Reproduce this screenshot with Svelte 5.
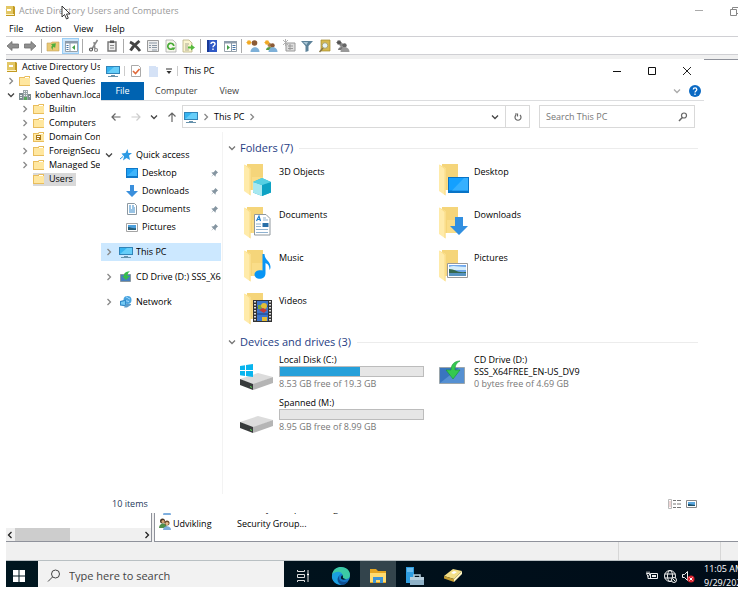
<script>
  const menus = ['File', 'Action', 'View', 'Help'];
  const tools = ['back', 'forward', '|', 'up', 'tree', '|', 'cut', 'clipboard', '|', 'delete', 'props', 'refresh', 'export', '|', 'help', 'pane', '|', 'user', 'group', 'unit', 'filter', 'find', 'addgroup'];
  const tree = [
    { label: 'Active Directory Users and Computers', level: 0, icon: 'book' },
    { label: 'Saved Queries', level: 1, icon: 'folder', arrow: 'right' },
    { label: 'kobenhavn.local', level: 1, icon: 'domain', arrow: 'down' },
    { label: 'Builtin', level: 2, icon: 'folder', arrow: 'right' },
    { label: 'Computers', level: 2, icon: 'folder', arrow: 'right' },
    { label: 'Domain Controllers', level: 2, icon: 'ou', arrow: 'right' },
    { label: 'ForeignSecurityPrincipals', level: 2, icon: 'folder', arrow: 'right' },
    { label: 'Managed Service Accounts', level: 2, icon: 'folder', arrow: 'right' },
    { label: 'Users', level: 2, icon: 'folder', selected: true }
  ];
  const nav = [
    [
      { label: 'Quick access', icon: 'star', arrow: 'down' },
      { label: 'Desktop', icon: 'desktop', pin: true },
      { label: 'Downloads', icon: 'download', pin: true },
      { label: 'Documents', icon: 'document', pin: true },
      { label: 'Pictures', icon: 'picture', pin: true }
    ],
    [{ label: 'This PC', icon: 'pc', arrow: 'right', selected: true }],
    [{ label: 'CD Drive (D:) SSS_X64FREE_EN-US_DV9', icon: 'cd', arrow: 'right' }],
    [{ label: 'Network', icon: 'network', arrow: 'right' }]
  ];
  const folders = ['3D Objects', 'Desktop', 'Documents', 'Downloads', 'Music', 'Pictures', 'Videos'];
  const drives = [
    { name: 'Local Disk (C:)', used: 56, free: '8.53 GB free of 19.3 GB', icon: 'system' },
    { name: 'CD Drive (D:)', label: 'SSS_X64FREE_EN-US_DV9', free: '0 bytes free of 4.69 GB', icon: 'cd' },
    { name: 'Spanned (M:)', used: 0, free: '8.95 GB free of 8.99 GB', icon: 'disk' }
  ];
</script>

{#snippet chevron(dir)}
  <svg class="chev" viewBox="0 0 8 8" class:down={dir === 'down'}><path d="M2.500 1 L5.500 4 L2.500 7" fill="none" stroke="currentColor" stroke-width="1.300" /></svg>
{/snippet}

{#snippet treeIcon(kind)}
  <svg class="i12" viewBox="0 0 12 12">
    {#if kind === 'book'}
      <path d="M1 1h9l1 1v9H1z" fill="#c29a22" /><path d="M1 1h8v9H1z" fill="#e3c765" /><path d="M3 4h4v2H3z" fill="#fff" /><path d="M1 9h9v1H1z" fill="#fff3c4" />
    {:else if kind === 'domain'}
      <path d="M4 1h5v10H4z" fill="#9aa5a8" /><path d="M0 4h4v7H0zM9 5h3v6H9z" fill="#7d8b8f" /><path d="M5 2h1v1H5zM7 2h1v1H7zM5 4h1v1H5zM7 4h1v1H7zM5 6h1v1H5zM7 6h1v1H7zM1 6h2v1H1zM1 8h2v1H1zM10 7h1v1h-1z" fill="#eef4f4" /><path d="M5 8h3v3H5z" fill="#57a85c" />
    {:else}
      <path d="M0 2h5l1-1h5v10H0z" fill="#e9bd5c" /><path d="M1 3h10v7H1z" fill="#ffe7a0" /><path d="M6 2h4v1H6z" fill="#fff" />
      {#if kind === 'ou'}<path d="M3 4h5v5H3z" fill="#a8781c" /><path d="M4 5h3v1H4zM4 7h2v1H4z" fill="#fff" />{/if}
    {/if}
  </svg>
{/snippet}

{#snippet toolIcon(kind)}
  <svg class="i14" viewBox="0 0 14 14">
    {#if kind === 'back' || kind === 'forward'}
      <path d={kind === 'back' ? 'M1 7l5-4.500v2.500h6.500v4H6v2.500z' : 'M13 7L8 2.500v2.500H1.500v4H8v2.500z'} fill="#8f8f8f" stroke="#6f6f6f" stroke-width=".8" />
    {:else if kind === 'up'}
      <path d="M1 4h4l1-1h7v9H1z" fill="#e9c976" stroke="#c6a35a" stroke-width=".6" /><path d="M4 10c0-3 1-4 3-4V4l4 3-4 3V8c-1 0-2 0-3 2z" fill="#4fae3c" transform="rotate(-45 7 7)" />
    {:else if kind === 'tree' || kind === 'pane'}
      <path d="M1.500 2.500h12v10h-12z" fill="#fff" stroke="#98a2aa" /><path d="M1 2h13v2.500H1z" fill="#8c9baa" /><path d="M2.500 6h2v1h-2zM2.500 8h2v1h-2zM2.500 10h2v1h-2z" fill={kind === 'tree' ? '#4475a8' : '#fff'} /><path d="M9.500 6h3v1h-3zM9.500 8h3v1h-3zM9.500 10h3v1h-3z" fill={kind === 'pane' ? '#4475a8' : '#fff'} />
      <path d={kind === 'tree' ? 'M6 4v8' : 'M8.500 4v8'} stroke="#8c9baa" />
      <path d={kind === 'tree' ? 'M11 6v5L8 8.500z' : 'M4 6v5l3-2.500z'} fill="#43a047" />
    {:else if kind === 'cut'}
      <path d="M10.500 1L5 10M7 3l1 7" stroke="#888" stroke-width="1.500" fill="none" /><circle cx="4" cy="10.500" r="1.500" fill="none" stroke="#555" stroke-width="1.200" /><circle cx="9" cy="11" r="1.500" fill="none" stroke="#888" stroke-width="1.200" />
    {:else if kind === 'clipboard'}
      <path d="M3 3h8v9H3z" fill="#eee" stroke="#777" stroke-width="1.400" /><path d="M5 1.500h4v2.500H5z" fill="#555" /><path d="M5 6.500h4M5 9h4" stroke="#888" />
    {:else if kind === 'delete'}
      <path d="M2 3c4 2 7 5 10 9M11.500 2C8 5 5 7 2.500 11.500" stroke="#444" stroke-width="2.800" fill="none" />
    {:else if kind === 'props'}
      <path d="M1.500 1.500h11v11h-11z" fill="#eee" stroke="#999" /><path d="M3 4h8M3 6.500h2m1 0h5M3 8.500h2m1 0h5M6 11h5" stroke="#8b98a4" />
    {:else if kind === 'refresh'}
      <path d="M2 1h7l3 3v9H2z" fill="#f7f7ee" stroke="#aaa" stroke-width=".8" /><path d="M8.800 9.500A3 3 0 1 1 9.800 7" fill="none" stroke="#49ab37" stroke-width="1.700" /><path d="M7.500 8.500h4l-1.800 2.800z" fill="#49ab37" />
    {:else if kind === 'export'}
      <path d="M1 1h6l3 3v9H1z" fill="#fbf5cf" stroke="#b8af83" stroke-width=".8" /><path d="M3 5h4M3 7h3M3 9h3M3 11h4" stroke="#8b8b7a" stroke-width=".7" /><path d="M6 7.500h3V5.500l4 3-4 3V9.500H6z" fill="#55ba3d" />
    {:else if kind === 'help'}
      <path d="M2 1h10v12H2z" fill="#3059c6" /><path d="M2 1h2v12H2z" fill="#183996" /><path d="M6 5c0-2.400 4-2.400 4 0 0 1.500-2 1.500-2 3.200M8 9.500V11" stroke="#fff" stroke-width="1.400" fill="none" />
    {:else if kind === 'filter'}
      <path d="M1 2h12L8.500 7v5L5.500 13V7z" fill="#5d8299" /><path d="M3 3h5L6.500 6z" fill="#a9c6d6" />
    {:else if kind === 'find'}
      <path d="M3 1h9v11H3z" fill="#d6b94d" stroke="#a58a2c" stroke-width=".7" /><circle cx="7" cy="6.500" r="2.800" fill="#e6f3f7" stroke="#a9a374" /><path d="M5 9l-3.500 4" stroke="#887746" stroke-width="1.500" />
    {:else if kind === 'unit'}
      <path d="M4 4h9v8H4z" fill="#ddd" stroke="#999" /><path d="M6 7h5M6 9.500h5M8 5v6" stroke="#999" /><path d="M1 1l5 5M6 1L1 6M3.500 0v7" stroke="#aaa" stroke-width=".9" />
    {:else if kind === 'members'}
      <circle cx="4.500" cy="4" r="2.500" fill="#4a3422" /><circle cx="5" cy="4.500" r="1.500" fill="#d9a777" /><path d="M1 11c0-6 8-6 8 0z" fill="#4f8f4a" />
      <circle cx="9" cy="6" r="2.500" fill="#6c4a2b" /><circle cx="9" cy="6.500" r="1.600" fill="#e8bd8d" /><path d="M5 13c0-5 8-5 8 0z" fill="#7eaede" />
    {:else}
      {@const grey = kind === 'addgroup'}
      {#if kind !== 'user'}<circle cx="5.500" cy="6" r="2" fill={grey ? '#888' : '#a9804e'} /><path d="M2 11c0-4 7-4 7 0z" fill={grey ? '#777' : '#559c45'} />{/if}
      <circle cx="8.500" cy={kind === 'user' ? 4 : 6.500} r={kind === 'user' ? 2.800 : 2.200} fill={grey ? '#666' : '#8b5a35'} /><path d="M4.500 13c0-6.500 9-6.500 9 0z" fill={grey ? '#999' : '#7eb0d8'} />
      <path d="M0.500 3.500h5M3 1v5M1.300 1.800l3.400 3.400M4.700 1.800L1.300 5.200" stroke={grey ? '#555' : '#f2a922'} stroke-width="1.100" />
    {/if}
  </svg>
{/snippet}

{#snippet navIcon(kind)}
  <svg class="i14" viewBox="0 0 14 14">
    {#if kind === 'star'}
      <path d="M8.500 1l.8 4H13l-3 2.500 1 4.500-3.500-2L4 12.500 5 8.500 2.500 5.500 6.500 5z" fill="#2c9ae4" /><path d="M1 11l3-2.500" stroke="#2c9ae4" />
    {:else if kind === 'desktop'}
      <path d="M1 2h12v10H1z" fill="#0f78c8" /><path d="M2 3h10v7H2z" fill="#1ea1f5" /><path d="M2 10L10 3h2v7z" fill="#40b5fb" />
    {:else if kind === 'download'}
      <path d="M5 1h4v6h4l-6 6-6-6h4z" fill="#3a8fdc" />
    {:else if kind === 'document'}
      <path d="M2.500 1.500h7l2 2v9h-9z" fill="#fff" stroke="#8c98a1" /><path d="M4 4h2m1 0h2M4 6h2m1 0h3M4 8h6M4 10h6" stroke="#3287c9" />
    {:else if kind === 'picture'}
      <path d="M1.500 3.500h11v8h-11z" fill="#fff" stroke="#a5a5a5" /><path d="M3 5h8v5H3z" fill="#4b9fdc" /><path d="M3 7c3 0 5 2 8 1v2H3z" fill="#285e78" />
    {:else if kind === 'pc'}
      <path d="M0 2h14v8H0z" fill="#3184b8" /><path d="M1 3h12v6H1z" fill="#36b4f0" /><path d="M1 9l7-6h5v6z" fill="#67cef9" /><path d="M5 11h4v1H5zM2 12h10v1H2z" fill="#6792ac" />
    {:else if kind === 'cd'}
      <path d="M1.500 4.500h10v7h-10z" fill="#467fbd" stroke="#8a979f" /><path d="M11 1C6 2 5 3 5 6H3l4 4 4-4H8.500c0-2 .5-3 2.500-5z" fill="#36bd4c" />
    {:else}
      <circle cx="8.500" cy="5" r="4" fill="#4aa4df" /><path d="M7 2c2 0 2 2 4 2M6 5.500l4 1" stroke="#a7dcff" fill="none" /><path d="M1 6l6-1.500v7L1 10.500z" fill="#328bc9" /><path d="M2 7l4-1v4l-4-.5z" fill="#75caf4" /><path d="M7 9h5v1L8 12.500H5z" fill="#5f9cc9" />
    {/if}
  </svg>
{/snippet}

{#snippet folderIcon(kind)}
  <svg class="big" viewBox="0 0 34 34">
    <path d="M8 1h16v26H8z" fill="#f5d57a" /><path d="M13 14h11v13H13z" fill="#fadd88" /><path d="M5 1.500L11.500 5v27.500L5 28z" fill="#ffebaa" /><path d="M5 1.500L11.500 5v27.500l-1-.7V6z" fill="#f9dc86" />
    {#if kind === '3D Objects'}
      <path d="M14 19l9-4 9 4v10.500l-9 3.500-9-3.500z" fill="#27b4d0" /><path d="M14 19l9 3v11l-9-3.500z" fill="#a7e8f0" /><path d="M23 22l9-3v10.500L23 33z" fill="#0da2c4" /><path d="M14 19l9-4 9 4-9 3z" fill="#56d0e3" />
    {:else if kind === 'Desktop'}
      <path d="M14 14h21v16H14z" fill="#0873c6" /><path d="M15 15h19v12.500H15z" fill="#14a0ff" /><path d="M18 27.500L30 15h4v12.500z" fill="#36b0ff" />
    {:else if kind === 'Documents'}
      <path d="M15.500 8.500H27l4 4v16.500H15.500z" fill="#fff" stroke="#8f989d" /><path d="M17.500 15l2.500-5 1.500 5M18.500 13.500h3" stroke="#1b7fd0" stroke-width="1.200" fill="none" /><path d="M24 12h3M24 14h5M17 18h5M17 20.500h5M17 23.500h12M17 26.500h12" stroke="#8fb2d0" /><path d="M23.500 17h6v4h-6z" fill="#286fa8" />
    {:else if kind === 'Downloads'}
      <path d="M21 11h8v9h5l-9 9-9-9h5z" fill="#318fe0" />
    {:else if kind === 'Music'}
      <path d="M23.500 5h2c0 6 6 7 6 13 0 2-1 3-1 3 0-5-2-6-4-7v10c0 8-11 7-11 1.500 0-4 5-5 8-4z" fill="#0795f5" />
    {:else if kind === 'Pictures'}
      <path d="M13.500 14.500h20v14h-20z" fill="#fff" stroke="#999" /><path d="M15 16h17v11H15z" fill="#70a8ed" /><path d="M15 18c5-2 8 0 17 0v3H15z" fill="#d6edfa" /><path d="M15 20c6 0 8 4 17 3v2H15z" fill="#36694f" /><path d="M15 24h17v3H15z" fill="#5793c0" />
    {:else}
      <path d="M14 8h19v22H14z" fill="#333" /><path d="M18 9h11v20H18z" fill="#3c75cc" /><path d="M18 22h11M18 16l11-2" stroke="#183c80" /><circle cx="25" cy="14" r="3" fill="#e4bd35" /><path d="M20 18l4-2 4 2-3 3z" fill="#c53a37" /><path d="M23 25h5v4h-5z" fill="#e4bd35" /><path d="M19 13h3v4h-3z" fill="#7aa83d" /><path d="M16 9v20M31 9v20" stroke="#ddd" stroke-width="2" stroke-dasharray="1.500 1.500" />
    {/if}
  </svg>
{/snippet}

{#snippet driveIcon(kind)}
  <svg class="big" viewBox="0 0 34 34">
    {#if kind === 'cd'}
      <path d="M5.500 10.500h25v16h-25z" fill="#3975bf" stroke="#9aa5ab" /><path d="M6 26L25 11h5v15z" fill="#5590d2" /><path d="M26 4c-6 0-9 4-9 9h-5l7 9 7-9h-5c0-4 1-7 5-9z" fill="#35c94f" stroke="#169536" stroke-width=".6" />
    {:else}
      <path d="M1 22l18-6 15 4-20 8z" fill="#dcdcdc" /><path d="M1 22l13 5v6L1 28z" fill="#383b3c" /><path d="M14 27l20-7v6l-20 7z" fill="#b5b5b5" /><path d="M11 29l2 1v1l-2-1z" fill="#5cdb54" />
      {#if kind === 'system'}<path d="M1 9l5-.7V13H1zM7 8l7-1v6H7zM1 14h5v5l-5-.7zM7 14h7v6l-7-1z" fill="#08b4ee" />{/if}
    {/if}
  </svg>
{/snippet}

<div class="desktop">
  <section class="console">
    <header class="c-title">
      {@render treeIcon('book')}
      <h1>Active Directory Users and Computers</h1>
      <svg class="winctl" viewBox="0 0 48 12"><path d="M5 5.500h8" stroke="#aaa" /><path d="M40.500 4.500h6v6h-6zM42.500 4V2.500h6v6H47" fill="none" stroke="#888" /></svg>
    </header>
    <nav class="c-menu">
      {#each menus as m}<button>{m}</button>{/each}
    </nav>
    <div class="c-tools">
      {#each tools as t}
        {#if t === '|'}<i></i>{:else}<button aria-label={t} class:on={t === 'tree'}>{@render toolIcon(t)}</button>{/if}
      {/each}
    </div>

    <div class="c-body">
      <div class="c-tree">
        <ul>
          {#each tree as n}
            <li class="l{n.level}">
              {#if n.level}<span class="tw">{#if n.arrow}{@render chevron(n.arrow)}{/if}</span>{/if}
              <span class="node" class:sel={n.selected}>{@render treeIcon(n.icon)}<span>{n.label}</span></span>
            </li>
          {/each}
        </ul>
        <div class="scroll">
          <button aria-label="Scroll left" class="flip">{@render chevron('right')}</button>
          <div class="track"><div class="thumb"></div></div>
          <button aria-label="Scroll right">{@render chevron('right')}</button>
        </div>
      </div>
      <div class="c-list">
        <table>
          <tbody>
            <tr><td>{@render toolIcon('members')}</td><td>Schema</td><td>Security Group...</td><td>Designated</td></tr>
            <tr><td>{@render toolIcon('members')}</td><td>Udvikling</td><td>Security Group...</td><td></td></tr>
          </tbody>
        </table>
      </div>

      <section class="explorer">
        <header class="e-title">
          {@render navIcon('pc')}
          <i></i>
          <svg class="i14" viewBox="0 0 14 14"><path d="M2.500 1.500h7l2 2v9h-9z" fill="#fff" stroke="#aaa" /><path d="M4 7l2.500 2.500L10.500 5" fill="none" stroke="#e0693a" stroke-width="1.600" /></svg>
          <svg class="i14" viewBox="0 0 14 14"><path d="M2 2h7v1h2v10H2z" fill="#d5e2f6" /></svg>
          <svg class="i8" viewBox="0 0 8 8"><path d="M1 2h6" stroke="#333" /><path d="M1.500 4h5L4 7z" fill="#333" /></svg>
          <i></i>
          <h2>This PC</h2>
          <div class="e-ctl">
            <button aria-label="Minimize"><svg viewBox="0 0 10 10"><path d="M1 5.500h8" stroke="#111" /></svg></button>
            <button aria-label="Maximize"><svg viewBox="0 0 10 10"><path d="M1.500 1.500h7v7h-7z" fill="none" stroke="#111" /></svg></button>
            <button aria-label="Close"><svg viewBox="0 0 10 10"><path d="M1 1l8 8M9 1L1 9" stroke="#222" /></svg></button>
          </div>
        </header>
        <nav class="e-tabs">
          <button class="file">File</button>
          <button>Computer</button>
          <button>View</button>
          <span class="tail">
            {@render chevron('down')}
            <svg class="i12" viewBox="0 0 12 12"><circle cx="6" cy="6" r="6" fill="#0b6ac4" /><path d="M4.300 4.500c0-2.300 3.500-2.300 3.500 0C7.800 6 6 5.800 6 7.400M6 8.500V10" fill="none" stroke="#fff" stroke-width="1.300" /></svg>
          </span>
        </nav>
        <div class="e-addr">
          <div class="arrows">
            <svg class="i12" viewBox="0 0 12 12"><path d="M10.500 6H2.500M5.500 2.500L2 6l3.500 3.500" fill="none" stroke="#666" stroke-width="1.200" /></svg>
            <svg class="i12" viewBox="0 0 12 12"><path d="M1.500 6h8M6.500 2.500L10 6 6.500 9.500" fill="none" stroke="#ccc" stroke-width="1.200" /></svg>
            {@render chevron('down')}
            <svg class="i12" viewBox="0 0 12 12"><path d="M6 11V2M2.500 5.500L6 2l3.500 3.500" fill="none" stroke="#666" stroke-width="1.200" /></svg>
          </div>
          <div class="path">
            {@render navIcon('pc')}{@render chevron('right')}<span>This PC</span>{@render chevron('right')}
            <span class="drop">{@render chevron('down')}</span>
            <button aria-label="Refresh"><svg class="i12" viewBox="0 0 12 12"><path d="M4 4A3 3 0 1 0 8 4M3 3h2.500v2.500" fill="none" stroke="#666" stroke-width="1.200" /></svg></button>
          </div>
          <label class="find">
            <input type="text" placeholder="Search This PC" aria-label="Search This PC" />
            <svg class="i12" viewBox="0 0 12 12"><circle cx="7" cy="4.500" r="2.500" fill="none" stroke="#666" stroke-width="1.200" /><path d="M5.300 6.500L2 10" stroke="#666" stroke-width="1.500" /></svg>
          </label>
        </div>
        <div class="e-main">
          <aside>
            {#each nav as group}
              <ul>
                {#each group as n}
                  <li class:sel={n.selected} class:child={n.pin}>
                    <span class="tw">{#if n.arrow}{@render chevron(n.arrow)}{/if}</span>
                    {@render navIcon(n.icon)}
                    <span class="txt">{n.label}</span>
                    {#if n.pin}<svg class="pin" viewBox="0 0 10 10"><path d="M6 1l3 3-1 .5L6.500 6 6 8.500 4 6.500 1 9l2.500-3L1.500 4 4 3.500 5.500 2z" fill="#8595a1" /></svg>{/if}
                  </li>
                {/each}
              </ul>
            {/each}
          </aside>
          <div class="files">
            <h3>{@render chevron('down')}Folders (7)</h3>
            <div class="grid">
              {#each folders as f}
                <div class="item">{@render folderIcon(f)}<div class="meta one">{f}</div></div>
              {/each}
            </div>
            <h3>{@render chevron('down')}Devices and drives (3)</h3>
            <div class="grid">
              {#each drives as d}
                <div class="item">
                  {@render driveIcon(d.icon)}
                  <div class="meta">
                    <div>{d.name}</div>
                    {#if d.label}<div>{d.label}</div>{:else}<div class="bar"><div style="width:{d.used}%"></div></div>{/if}
                    <div class="dim">{d.free}</div>
                  </div>
                </div>
              {/each}
            </div>
          </div>
        </div>
        <footer class="e-status">
          <span>10 items</span>
          <svg viewBox="0 0 30 12"><path d="M.5 1.500h3v9h-3z" fill="#fff" stroke="#bbb" /><path d="M1.500 4h1M1.500 6h1M1.500 8h1" stroke="#b55" /><path d="M5 2.500h3m1 0h4M5 6h3m1 0h4M5 9.500h3m1 0h4" stroke="#777" /><path d="M18.500 2.500h10v7h-10z" fill="#fff" stroke="#888" /><path d="M20 4h7v4h-7z" fill="#5ca8df" /><path d="M20 6c3 0 4 1 7 1v1h-7z" fill="#1d4f67" /></svg>
        </footer>
      </section>
    </div>
    <footer class="c-status"><span></span><span></span></footer>
  </section>

  <footer class="taskbar">
    <button class="start" aria-label="Start"><svg class="i14" viewBox="0 0 14 14"><path d="M1 1h5.500v5.500H1zM7.500 1H13v5.500H7.500zM1 7.500h5.500V13H1zM7.500 7.500H13V13H7.500z" fill="#fff" /></svg></button>
    <label class="tsearch">
      <svg class="i14" viewBox="0 0 14 14"><circle cx="8.500" cy="5" r="4" fill="none" stroke="#444" /><path d="M5.500 8L1 12.500" stroke="#444" /></svg>
      <input type="text" placeholder="Type here to search" aria-label="Type here to search" />
    </label>
    <div class="apps">
      <button aria-label="Task view"><svg class="i14" viewBox="0 0 14 14"><path d="M1.500 1v1.500h7V1M1.500 13v-1.500h7V13M1.500 5.500h7v3h-7z" fill="none" stroke="#ddd" /><path d="M12 1v3m0 3v6" stroke="#ddd" /><path d="M11 4.500h2v2h-2z" fill="#fff" /></svg></button>
      <button aria-label="Edge"><svg class="i20" viewBox="0 0 20 20"><circle cx="10" cy="10" r="9" fill="#1678c8" /><path d="M1 9C2 3 6 1 10 1c6 0 9 4 9 8 0 3-2 4-4 4s-4-1-3-3c0-4-8-5-11-1z" fill="#3cc9a4" /><path d="M1 9c3-4 9-4 10-1-5 0-5 7 0 11C5 19 0 15 1 9z" fill="#1a9fe0" /><path d="M8 10c-1 6 5 7 9 5-2 3-4 4-6 4-4-1-6-6-3-9z" fill="#0e4f92" /><path d="M12 10c-1 2 1 3 3 3-1 1-5 1-5-1 0-2 1-3 2-2z" fill="#021722" /></svg></button>
      <button aria-label="File Explorer" class="on"><svg class="i20" viewBox="0 0 20 20"><path d="M2 3h6l2 2h8v12H2z" fill="#e5a622" /><path d="M2 7h16v9H2z" fill="#ffdc71" /><path d="M5 11h10v6h-3v-3H8v3H5z" fill="#3d94d6" /></svg></button>
      <button aria-label="Server Manager"><svg class="i20" viewBox="0 0 20 20"><path d="M1 1h8v16H1z" fill="#2f9de0" /><path d="M2 3h6M2 5h6" stroke="#a5dafa" /><path d="M5 11h14v8H5z" fill="#8fb2c8" /><path d="M5 11h14v3H5z" fill="#b7cfdd" /><path d="M9 11V9h6v2" fill="none" stroke="#b7cfdd" stroke-width="1.500" /></svg></button>
      <button aria-label="Directory"><svg class="i20" viewBox="0 0 20 20"><path d="M1 10l9-7 9 2-8 8z" fill="#f2df87" /><path d="M1 10l10 3v3L1 12.500z" fill="#c49d31" /><path d="M11 13l8-8v3l-8 8z" fill="#fff4c0" /><path d="M8 7l3-2 3 1-3 2z" fill="#fff" /></svg></button>
    </div>
    <div class="tray">
      <svg class="i14" viewBox="0 0 14 14"><path d="M5.500 4.500h7v5h-7z" fill="none" stroke="#eee" /><path d="M7 6h4v2H7z" fill="#eee" /><path d="M1.500 4.500h3v1.500L3 7.500zM2 2.500v2M4 2.500v2M3 7v2.500h3" fill="none" stroke="#eee" /></svg>
      <svg class="i14" viewBox="0 0 14 14"><circle cx="7" cy="7" r="5.500" fill="none" stroke="#eee" /><ellipse cx="7" cy="7" rx="2.500" ry="5.500" fill="none" stroke="#eee" /><path d="M1.500 5h11M1.500 9h11" stroke="#eee" /><circle cx="11" cy="11" r="2.500" fill="#001018" stroke="#eee" /><path d="M9.500 9.500l3 3" stroke="#eee" /></svg>
      <svg class="i14" viewBox="0 0 14 14"><path d="M1.500 5.500h2l3-3v9l-3-3h-2z" fill="none" stroke="#eee" /><circle cx="10" cy="10" r="3.500" fill="#dc2430" /><path d="M8.500 8.500l3 3m0-3l-3 3" stroke="#fff" /></svg>
    </div>
    <div class="clock"><span>11:05 AM</span><span>9/29/2021</span></div>
  </footer>

  <svg class="cursor" viewBox="0 0 10 15"><path d="M1 1v11l2.500-2.500L5.500 14l1.800-.8L5.500 9H9z" fill="#fff" stroke="#222" stroke-width=".9" /></svg>
</div>

<style>
  :global(body) { background: #fff; }
  .desktop, .desktop * { box-sizing: border-box; }
  .desktop {
    position: relative;
    margin: 0 5px 0 6px;
    height: calc(100vh - 5px);
    display: flex;
    flex-direction: column;
    overflow: hidden;
    font: 9px/12px "Open Sans", "Noto Sans", sans-serif;
    color: #000;
  }
  button { border: 0; padding: 0; background: none; font: inherit; color: inherit; display: flex; align-items: center; justify-content: center; }
  input { border: 0; padding: 0; background: none; font: inherit; min-width: 0; flex: 1; outline: 0; }
  ul { list-style: none; margin: 0; padding: 0; }
  h1, h2, h3 { margin: 0; font: inherit; }
  svg { flex: none; display: block; }
  .i8, .chev { width: 8px; height: 8px; }
  .i12 { width: 12px; height: 12px; }
  .i14 { width: 14px; height: 14px; }
  .i20 { width: 20px; height: 20px; }
  .big { width: 34px; height: 34px; overflow: visible; }
  .chev { color: #888; }
  .chev.down { transform: rotate(90deg); color: #444; }
  .cursor { position: absolute; left: 55px; top: 5px; width: 10px; height: 15px; }

  .console { flex: 1; min-height: 0; display: flex; flex-direction: column; }
  .c-title { height: 21px; display: flex; align-items: center; color: #999; }
  .c-title h1 { flex: 1; }
  .c-title .winctl { width: 48px; height: 12px; }
  .c-title .i12 { margin-left: -2px; margin-right: 3px; }
  .c-menu { height: 15px; display: flex; gap: 12px; padding-left: 3px; }
  .c-tools { height: 19px; border: solid #d0d0d4; border-width: 1px 0; display: flex; align-items: center; gap: 1px; }
  .c-tools button { width: 17px; height: 16px; }
  .c-tools button:first-child { width: 14px; }
  .c-tools .on { background: #cce5fa; outline: 1px solid #99cdf5; outline-offset: -1px; }
  .c-tools i { width: 1px; height: 14px; background: #aaa; margin: 0 1px 0 2px; }

  .c-body { flex: 1; min-height: 0; display: flex; gap: 2px; padding-top: 4px; background: #f0f0f0; position: relative; }
  .c-tree { width: 146px; background: #fff; border: solid #8f929b; border-width: 1px 1px 1px 0; display: flex; flex-direction: column; justify-content: space-between; }
  .c-tree ul { width: 94px; }
  .c-tree li { height: 14px; display: flex; align-items: center; white-space: nowrap; overflow: hidden; }
  .c-tree .l2 { padding-left: 14px; }
  .tw { width: 13px; display: flex; justify-content: center; padding-right: 3px; flex: none; }
  .c-tree .node { display: flex; align-items: center; gap: 4px; padding-right: 3px; height: 13px; }
  .c-tree .sel { background: #d9d9d9; }
  .scroll { height: 13px; background: #f0f0f0; display: flex; }
  .scroll button { width: 9px; }
  .scroll .chev { color: #222; }
  .scroll .flip { transform: scaleX(-1); }
  .track { flex: 1; display: flex; }
  .thumb { width: 43%; background: #cdcdcd; }
  .c-list { flex: 1; background: #fff; border: solid #8f929b; border-width: 1px 0 1px 1px; display: flex; align-items: flex-end; padding: 0 0 10px 3px; }
  table { border-collapse: collapse; }
  td { height: 15px; padding: 0; white-space: nowrap; }
  td:nth-child(1) { width: 15px; }
  td:nth-child(2) { width: 64px; }
  td:nth-child(3) { width: 78px; }
  .c-status { height: 18px; background: #f0f0f0; display: flex; justify-content: flex-end; }
  .c-status span { border-left: 1px solid #d7d7d7; width: 102px; }
  .c-status span:last-child { width: 18px; }

  .explorer { position: absolute; left: 95px; top: 4px; right: 34px; bottom: 29px; background: #fff; display: flex; flex-direction: column; }
  .e-title { height: 23px; display: flex; align-items: center; gap: 4px; padding-left: 5px; }
  .e-title i { width: 1px; height: 10px; background: #ccc; }
  .e-title h2 { padding-left: 2px; }
  .e-ctl { margin-left: auto; display: flex; }
  .e-ctl button { width: 35px; height: 20px; }
  .e-ctl svg { width: 10px; height: 10px; }
  .e-tabs { height: 19px; border-bottom: 1px solid #dcdddf; display: flex; color: #444; }
  .e-tabs button { padding: 0 11px; }
  .e-tabs .file { background: #0063b1; color: #fff; width: 43px; }
  .tail { margin-left: auto; display: flex; align-items: center; gap: 8px; padding-right: 3px; }
  .tail .chev.down { color: #aaa; }
  .e-addr { height: 31px; display: flex; align-items: center; gap: 9px; padding: 0 9px; }
  .arrows { display: flex; align-items: center; gap: 8px; flex: none; width: 63px; }
  .path { flex: 1; height: 23px; border: 1px solid #d9d9d9; display: flex; align-items: center; gap: 4px; padding-left: 1px; }
  .path .drop { margin-left: auto; padding-right: 2px; }
  .path button { width: 24px; height: 21px; border-left: 1px solid #d9d9d9; }
  .find { width: 156px; height: 23px; border: 1px solid #d9d9d9; display: flex; align-items: center; padding: 0 5px 0 6px; }
  input::placeholder { color: #777; opacity: 1; }
  .e-main { flex: 1; min-height: 0; display: flex; }
  aside { width: 122px; border-right: 1px solid #f3f3f3; padding: 14px 1px 0 0; display: flex; flex-direction: column; gap: 7px; }
  aside li { height: 18px; display: flex; align-items: center; white-space: nowrap; overflow: hidden; padding-left: 3px; }
  aside .tw { padding: 0; width: 10px; }
  aside .i14 { margin: 0 3px 0 5px; }
  aside .child .i14 { margin-left: 11px; }
  aside .txt { flex: 1; overflow: hidden; }
  aside .pin { width: 9px; height: 9px; margin-right: 2px; }
  aside .sel { background: #cce8ff; }
  .files { flex: 1; padding: 9px 6px 0 5px; }
  h3 { height: 14px; font-size: 11px; color: #263c83; display: flex; align-items: center; gap: 4px; white-space: nowrap; }
  h3 .chev.down { color: #777; }
  h3::after { content: ""; height: 1px; flex: 1; background: #ececec; margin-left: 2px; }
  .grid { display: grid; grid-template-columns: 195px 195px; grid-auto-rows: 43px; padding: 8px 0 0 11px; }
  .item { display: flex; gap: 6px; }
  .meta { width: 145px; line-height: 12px; white-space: nowrap; margin-top: -3px; }
  .meta.one { margin-top: 3px; }
  .bar { height: 11px; border: 1px solid #bcbcbc; background: #e6e6e6; margin-bottom: 1px; display: flex; }
  .bar div { background: #26a0da; }
  .dim { color: #777; }
  .e-status { height: 19px; display: flex; align-items: center; justify-content: space-between; padding: 0 6px 0 11px; color: #1e395b; }
  .e-status svg { width: 30px; height: 12px; }

  .taskbar { height: 27px; flex: none; background: linear-gradient(90deg, #00161f, #000c18); border-top: 1px solid #b9c0c3; display: flex; color: #fff; overflow: hidden; }
  .start, .tsearch, .apps button, .tray { padding-top: 3px; }
  .start { width: 32px; }
  .start .i14 { margin-right: 6px; }
  .tsearch { flex: 0 1 246px; background: #f2f2f2; display: flex; align-items: center; gap: 8px; padding-left: 9px; font-size: 11px; }
  .tsearch input::placeholder { color: #444; }
  .apps { display: flex; flex: 1; }
  .apps button { width: 38px; }
  .apps .on { width: 36px; background: #33444c; }
  .tray { display: flex; align-items: center; gap: 4px; padding-right: 9px; }
  .clock { width: 34px; display: flex; flex-direction: column; line-height: 14px; white-space: nowrap; padding-top: 1px; }
</style>
